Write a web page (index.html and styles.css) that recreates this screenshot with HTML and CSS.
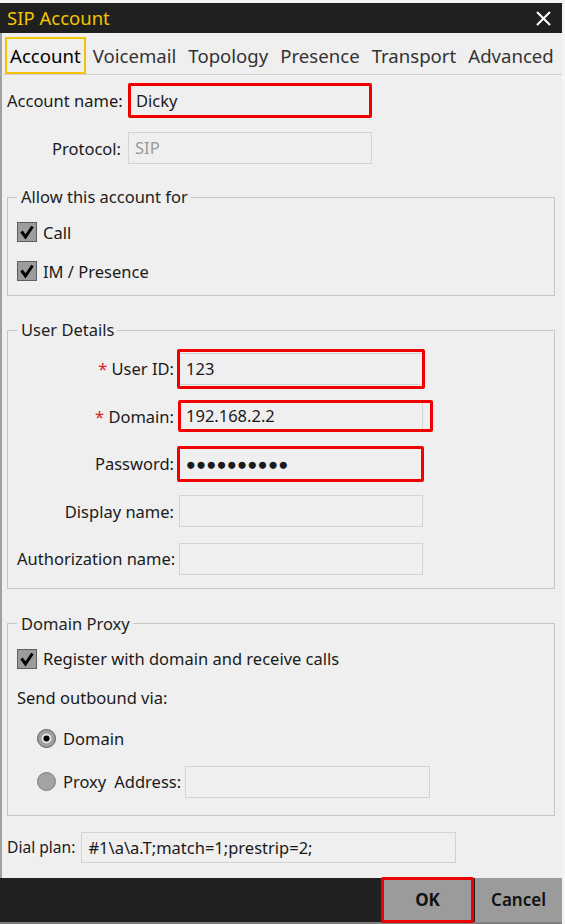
FILE: index.html
```html
<!DOCTYPE html>
<html lang="en">
<head>
    <meta charset="UTF-8">
    <meta name="viewport" content="width=device-width, initial-scale=1.0">
    <title>SIP Account</title>
    <link rel="stylesheet" href="styles.css">
</head>
<body>
    <div class="window">
        <div class="titlebar">
            <span class="title">SIP Account</span>
            <svg class="close" width="15" height="15" viewBox="0 0 15 15">
                <path d="M1 1 L14 14 M14 1 L1 14" stroke="#fff" stroke-width="2" fill="none"/>
            </svg>
        </div>

        <div class="tabs">
            <span class="tab active">Account</span>
            <span class="tab">Voicemail</span>
            <span class="tab">Topology</span>
            <span class="tab">Presence</span>
            <span class="tab">Transport</span>
            <span class="tab">Advanced</span>
        </div>

        <div class="content">
            <div class="form-top">
                <label class="lbl">Account name:</label>
                <div class="mark mark-acc"><div class="input input-acc">Dicky</div></div>
                <label class="lbl">Protocol:</label>
                <div class="input input-proto muted">SIP</div>
            </div>

            <fieldset class="group group-allow">
                <legend>Allow this account for</legend>
                <div class="check-row">
                    <svg class="cb" width="20" height="20" viewBox="0 0 20 20"><rect x="0.5" y="0.5" width="19" height="19" fill="#9c9c9c" stroke="#5f5f5f"/><path d="M4.5 9.5 L8.5 15 L15.5 4.5" fill="none" stroke="#000" stroke-width="3"/></svg>
                    <span>Call</span>
                </div>
                <div class="check-row">
                    <svg class="cb" width="20" height="20" viewBox="0 0 20 20"><rect x="0.5" y="0.5" width="19" height="19" fill="#9c9c9c" stroke="#5f5f5f"/><path d="M4.5 9.5 L8.5 15 L15.5 4.5" fill="none" stroke="#000" stroke-width="3"/></svg>
                    <span>IM / Presence</span>
                </div>
            </fieldset>

            <fieldset class="group group-user">
                <legend>User Details</legend>
                <div class="user-grid">
                    <label class="lbl"><span class="req">*</span> User ID:</label>
                    <div class="mark mark-uid"><div class="input">123</div></div>
                    <label class="lbl"><span class="req">*</span> Domain:</label>
                    <div class="mark mark-dom"><div class="input">192.168.2.2</div></div>
                    <label class="lbl">Password:</label>
                    <div class="mark mark-pwd"><div class="input dots">●●●●●●●●●●</div></div>
                    <label class="lbl">Display name:</label>
                    <div class="input"></div>
                    <label class="lbl">Authorization name:</label>
                    <div class="input"></div>
                </div>
            </fieldset>

            <fieldset class="group group-proxy">
                <legend>Domain Proxy</legend>
                <div class="check-row">
                    <svg class="cb" width="20" height="20" viewBox="0 0 20 20"><rect x="0.5" y="0.5" width="19" height="19" fill="#9c9c9c" stroke="#5f5f5f"/><path d="M4.5 9.5 L8.5 15 L15.5 4.5" fill="none" stroke="#000" stroke-width="3"/></svg>
                    <span>Register with domain and receive calls</span>
                </div>
                <div class="plain-row">Send outbound via:</div>
                <div class="radio-row">
                    <svg class="rb" width="19" height="19" viewBox="0 0 19 19"><circle cx="9.5" cy="9.5" r="9" fill="#9f9f9f" stroke="#5e5e5e"/><circle cx="9.5" cy="9.5" r="5" fill="#e2e2e2"/><circle cx="9.5" cy="9.5" r="3" fill="#000"/></svg>
                    <span>Domain</span>
                </div>
                <div class="radio-row proxy-row">
                    <svg class="rb" width="19" height="19" viewBox="0 0 19 19"><circle cx="9.5" cy="9.5" r="9" fill="#a3a3a3" stroke="#7c7c7c"/></svg>
                    <span class="proxy-word">Proxy</span>
                    <span class="addr-lbl">Address:</span>
                    <div class="input input-addr"></div>
                </div>
            </fieldset>

            <div class="dial-row">
                <label class="lbl-left">Dial plan:</label>
                <div class="input input-dial">#1\a\a.T;match=1;prestrip=2;</div>
            </div>
        </div>

        <div class="footer">
            <button class="btn btn-ok">OK</button>
            <button class="btn btn-cancel">Cancel</button>
        </div>
    </div>
</body>
</html>
```

FILE: styles.css
```css
body {
    margin: 0;
    background: #f4f4f4;
    font-family: "Noto Sans", sans-serif;
    color: #1a1a1a;
}
.window {
    margin-top: 3px;
    width: 562px;
    background: #efefef;
    border-bottom: 3px solid #7e7e7e;
}
.titlebar {
    height: 30px;
    background: #202020;
    display: flex;
    align-items: center;
    justify-content: space-between;
    padding: 0 11px 0 7px;
}
.title {
    color: #f5c400;
    font-size: 18.5px;
    line-height: 30px;
}
.close {
    display: block;
}
.tabs {
    display: flex;
    height: 42px;
    box-sizing: border-box;
    padding: 4px 0 0 3px;
    border-left: 2px solid #a0a0a0;
    border-bottom: 1px solid #d0d0d0;
}
.tab {
    font-size: 18.6px;
    line-height: 33px;
    padding: 0 3px;
    margin-right: 2px;
    color: #333;
    border: 2px solid transparent;
}
.tab.active {
    color: #000;
    border-color: #f5c400;
}
.content {
    border-left: 2px solid #a0a0a0;
    padding: 2px 0 15px 5px;
    font-size: 16.5px;
}
.form-top {
    display: grid;
    grid-template-columns: 114px 244px;
    grid-auto-rows: 47.5px;
    column-gap: 7px;
    align-items: center;
}
.lbl {
    text-align: right;
    white-space: nowrap;
}
.req {
    color: #e02020;
}
.input {
    box-sizing: border-box;
    height: 32px;
    border: 1px solid #d3d3d3;
    background: #efefef;
    padding: 0 6px;
    line-height: 30px;
    white-space: nowrap;
    overflow: hidden;
}
.input-acc {
    height: 35px;
    line-height: 33px;
    padding-left: 7px;
}
.muted {
    color: #9a9a9a;
}
.dots {
    font-size: 16.5px;
    letter-spacing: 0.3px;
}
.mark {
    position: relative;
}
.mark::after {
    content: "";
    position: absolute;
    border: 3px solid #f20000;
    border-radius: 2px;
    pointer-events: none;
}
.mark-acc::after { inset: 0; }
.mark-uid::after { inset: -4px -2px -4px -2px; }
.mark-dom::after { inset: 0 -10px 0 -1px; }
.mark-pwd::after { inset: -2px -1px -2px -2px; }

.group {
    margin: 0;
    width: 548px;
    box-sizing: border-box;
    min-width: 0;
    border: 1px solid #c6c6c6;
    padding: 12px 9px;
}
.group legend {
    padding: 0 3px 0 4px;
    line-height: 22px;
    color: #222;
}
.group-allow {
    margin-top: 14px;
}
.group-user {
    margin-top: 23px;
    padding: 4px 9px 5px;
}
.group-proxy {
    margin-top: 24px;
    padding-bottom: 17px;
}
.check-row, .radio-row, .plain-row {
    display: flex;
    align-items: center;
    height: 24px;
}
.check-row {
    gap: 6px;
}
.check-row + .check-row {
    margin-top: 15px;
}
.cb, .rb {
    display: block;
    flex: none;
}
.plain-row {
    margin-top: 15px;
}
.radio-row {
    gap: 7px;
    padding-left: 20px;
    margin-top: 17px;
}
.proxy-row {
    margin-top: 15px;
    height: 32px;
}
.addr-lbl {
    margin-left: 1px;
}
.input-addr {
    width: 245px;
    margin-left: -3px;
}
.user-grid {
    display: grid;
    grid-template-columns: 157px 244px;
    grid-auto-rows: 47.5px;
    column-gap: 5px;
    align-items: center;
}
.dial-row {
    display: flex;
    align-items: center;
    gap: 6px;
    margin-top: 16px;
}
.lbl-left {
    font-size: 15.6px;
}
.input-dial {
    width: 375px;
    height: 31px;
    line-height: 29px;
}
.footer {
    height: 44px;
    background: #212121;
    display: flex;
    justify-content: flex-end;
}
.btn {
    font-family: "Noto Sans", sans-serif;
    font-size: 17px;
    color: #111;
    background: #9b9b9b;
    border: none;
    padding: 0;
    cursor: pointer;
}
.btn-ok {
    width: 93px;
    border: 3px solid #f00000;
    border-radius: 2px;
    font-weight: 700;
    margin-top: -1px;
    height: 46px;
}
.btn-cancel {
    width: 87px;
    margin-left: 1px;
    font-weight: 600;
}
```
